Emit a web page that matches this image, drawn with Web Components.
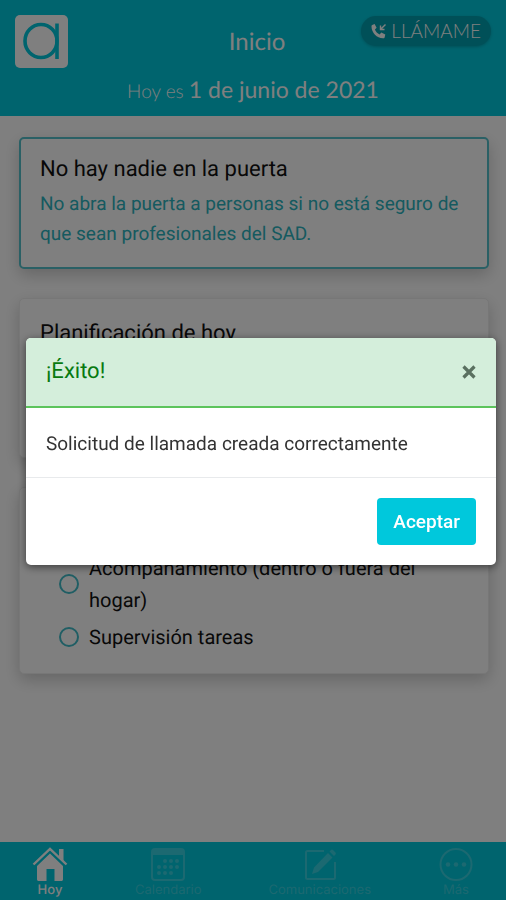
<!DOCTYPE html>
<html lang="es">
<head>
<meta charset="utf-8">
<meta name="viewport" content="width=device-width, initial-scale=1">
<title>Inicio</title>
<style>
  html, body { margin: 0; }
  body {
    --teal: #00c8dc;
    font-family: Roboto, "Liberation Sans", sans-serif;
    font-size: 19px;
    line-height: 30px;
    color: #111;
    background: #fff;
    text-rendering: geometricPrecision;
  }
</style>
</head>
<body>
<care-app>
  <app-header slot="header" heading="Inicio" date="1 de junio de 2021"></app-header>
  <info-card accent heading="No hay nadie en la puerta">
    <p>No abra la puerta a personas si no está seguro de que sean profesionales del SAD.</p>
  </info-card>
  <info-card class="plan" heading="Planificación de hoy"></info-card>
  <info-card class="tasks">
    <task-item label="Acompañamiento (dentro o fuera del hogar)"></task-item>
    <task-item label="Supervisión tareas"></task-item>
  </info-card>
  <tab-bar slot="footer"></tab-bar>
  <message-modal slot="modal" heading="¡Éxito!" action="Aceptar">Solicitud de llamada creada correctamente</message-modal>
</care-app>

<script>
class Base extends HTMLElement {
  connectedCallback() {
    if (this.shadowRoot) return;
    this.attachShadow({ mode: "open" }).innerHTML = this.render();
  }
}

customElements.define("care-app", class extends Base {
  render() {
    return `<style>
      :host { display: flex; flex-direction: column; min-height: 100vh; }
      main { flex: 1; display: flex; flex-direction: column; gap: 29px; padding: 21px 17px 21px 19px; }
      ::slotted(.plan) { min-height: 160px; --card-top: 19px; }
      ::slotted(.tasks) { --card-top: 64px; }
    </style>
    <slot name="header"></slot><main><slot></slot></main><slot name="footer"></slot><slot name="modal"></slot>`;
  }
});

customElements.define("app-header", class extends Base {
  render() {
    return `<style>
      :host { display: block; background: var(--teal); color: #fff; font-family: Lato, "Open Sans", sans-serif; }
      header { display: grid; grid-template-columns: 1fr auto 1fr; padding: 15px 15px 10px; }
      .logo { width: 53px; height: 53px; display: block; }
      h1 { margin: 0; padding: 12px 0 0 8px; font-size: 24px; line-height: 30px; font-weight: 400; }
      button { justify-self: end; align-self: start; display: flex; align-items: center; gap: 4px; height: 30px;
        margin: 1px 0 0; padding: 0 10px; border: 0; border-radius: 15px; background: #00a0b0; color: #fff;
        box-shadow: 0 1px 3px #0003; font: 300 19px/30px Lato, sans-serif; }
      button svg { width: 16px; height: 16px; }
      p { grid-column: 1 / -1; margin: 7px 0 0; text-align: center; font-size: 19px; line-height: 28px; font-weight: 300; }
      strong { font-size: 23px; font-weight: 400; }
    </style>
    <header>
      <svg class="logo" viewBox="0 0 53 53" aria-hidden="true">
        <rect width="53" height="53" rx="5" fill="#fff"/>
        <g fill="none" stroke="var(--teal)" stroke-width="3.6"><ellipse cx="26" cy="26" rx="16" ry="16.5"/><path d="M42 8.5V44"/></g>
      </svg>
      <h1>${this.getAttribute("heading")}</h1>
      <button type="button">
        <svg viewBox="0 0 16 16" aria-hidden="true"><path fill="#fff" d="M1.2 2 3.6 1l2 3.8-1.7 1.6c.8 2.300 2.600 4 4.700 5l1.700-1.800 4 1.900-.7 2.900c-.3.700-.900.900-1.700.900C5.800 15.300.7 9.500.5 3.700c0-.8.2-1.500.7-1.700z"/><path fill="none" stroke="#fff" stroke-width="1.400" d="M14.500 1.500 9.700 6.300M9.500 2.500v4h4"/></svg>
        LLÁMAME
      </button>
      <p>Hoy es <strong>${this.getAttribute("date")}</strong></p>
    </header>`;
  }
});

customElements.define("info-card", class extends Base {
  render() {
    const h = this.getAttribute("heading");
    return `<style>
      :host { display: block; box-sizing: border-box; border: 1px solid #eee; border-radius: 5px; background: #fff;
        padding: var(--card-top, 16px) 20px 20px; box-shadow: 0 6px 16px #0003; }
      :host([accent]) { border: 2px solid #54c0ca; padding: 15px 18px 18px 19px; }
      h2 { margin: 0 0 4px; font-size: 22px; line-height: 31px; font-weight: 400; }
      ::slotted(p) { margin: 0; color: #2cb4c0; }
      ::slotted(task-item:not(:last-child)) { margin-bottom: 5px; }
    </style>${h ? `<h2>${h}</h2>` : ""}<slot></slot>`;
  }
});

customElements.define("task-item", class extends Base {
  render() {
    return `<style>
      :host { display: block; }
      label { display: flex; align-items: center; gap: 10px; padding: 0 19px; font-size: 20px; line-height: 32px; }
      input { appearance: none; flex: none; width: 20px; height: 20px; margin: 0; border: 2px solid #40bcc8; border-radius: 50%; }
    </style><label><input type="checkbox">${this.getAttribute("label")}</label>`;
  }
});

customElements.define("tab-bar", class extends Base {
  render() {
    return `<style>
      :host { display: block; background: var(--teal); font-family: Inter, sans-serif; }
      nav { display: flex; justify-content: space-between; padding: 4px 32px 2px 32px; }
      a { display: flex; flex-direction: column; align-items: center; color: #38d2e2; text-decoration: none;
        font-size: 13px; line-height: 16px; }
      a[aria-current] { color: #fff; font-weight: 500; }
      svg { width: 36px; height: 36px; fill: none; stroke: currentColor; stroke-width: 2; }
      .f { fill: currentColor; stroke: none; }
    </style>
    <nav>
      <a href="#hoy" aria-current="page"><svg viewBox="0 0 36 36"><path class="f" d="M18 7.500 31 20v13c0 1.500-.5 2-2 2h-6.500V23h-8v12H7c-1.500 0-2-.5-2-2V20z"/><path stroke-width="2.400" d="M1.500 18.500 18 3l16.500 15.500"/><path class="f" d="M27 3h4.500v12L27 10.500z"/></svg>Hoy</a>
      <a href="#calendario"><svg viewBox="0 0 36 36"><rect x="2" y="3" width="32" height="31" rx="3"/><path class="f" d="M2 3h32v6H2z"/><g class="f"><circle cx="15" cy="15" r="2"/><circle cx="21" cy="15" r="2"/><circle cx="27" cy="15" r="2"/><circle cx="9" cy="21" r="2"/><circle cx="15" cy="21" r="2"/><circle cx="21" cy="21" r="2"/><circle cx="27" cy="21" r="2"/><circle cx="9" cy="27" r="2"/><circle cx="15" cy="27" r="2"/><circle cx="21" cy="27" r="2"/></g></svg>Calendario</a>
      <a href="#comunicaciones"><svg viewBox="0 0 36 36"><path d="M22 5H5.500Q4 5 4 6.500v25Q4 33 5.500 33h26q1.500 0 1.500-1.500V16"/><path class="f" d="m10 28 2-6.500L26 7l4.500 4.500L16 26zM27.500 5.500 29 4q1-.8 2 0l2.500 2.500q.8 1 0 2L32 10z"/></svg>Comunicaciones</a>
      <a href="#mas"><svg viewBox="0 0 36 36"><circle cx="18" cy="18.500" r="15.500"/><g class="f"><circle cx="10" cy="18.500" r="2.300"/><circle cx="18" cy="18.500" r="2.300"/><circle cx="26" cy="18.500" r="2.300"/></g></svg>Más</a>
    </nav>`;
  }
});

customElements.define("message-modal", class extends Base {
  render() {
    return `<style>
      :host { position: fixed; inset: 0; display: flex; align-items: center; padding: 2px 10px 0 26px; background: #00000080; }
      section { flex: 1; border-radius: 5px; overflow: hidden; background: #fff; box-shadow: 0 2px 8px #0008; }
      header { display: flex; justify-content: space-between; align-items: center; padding: 18px 20px; background: #d4eedb; border-bottom: 2px solid #5cc45c; }
      h2 { margin: 0; font-size: 22px; line-height: 32px; font-weight: 400; color: #087a10; }
      .close { display: flex; padding: 0; border: 0; background: none; color: #5a7060; }
      .close svg { width: 14px; height: 14px; }
      p { margin: 0; padding: 21px 20px 19px; line-height: 29px; color: #333; border-bottom: 1px solid #e8eaec; }
      footer { display: flex; justify-content: flex-end; padding: 20px; }
      .ok { padding: 8px 16px; border: 0; border-radius: 4px; background: var(--teal); color: #fff; font: 500 19px/31px Roboto, sans-serif; }
    </style>
    <section role="dialog" aria-modal="true" aria-labelledby="t">
      <header><h2 id="t">${this.getAttribute("heading")}</h2>
        <button class="close" type="button" aria-label="Cerrar"><svg viewBox="0 0 14 14"><path d="m1.500 1.500 11 11m0-11-11 11" stroke="currentColor" stroke-width="3.200"/></svg></button></header>
      <p><slot></slot></p>
      <footer><button class="ok" type="button">${this.getAttribute("action")}</button></footer>
    </section>`;
  }
});
</script>
</body>
</html>
